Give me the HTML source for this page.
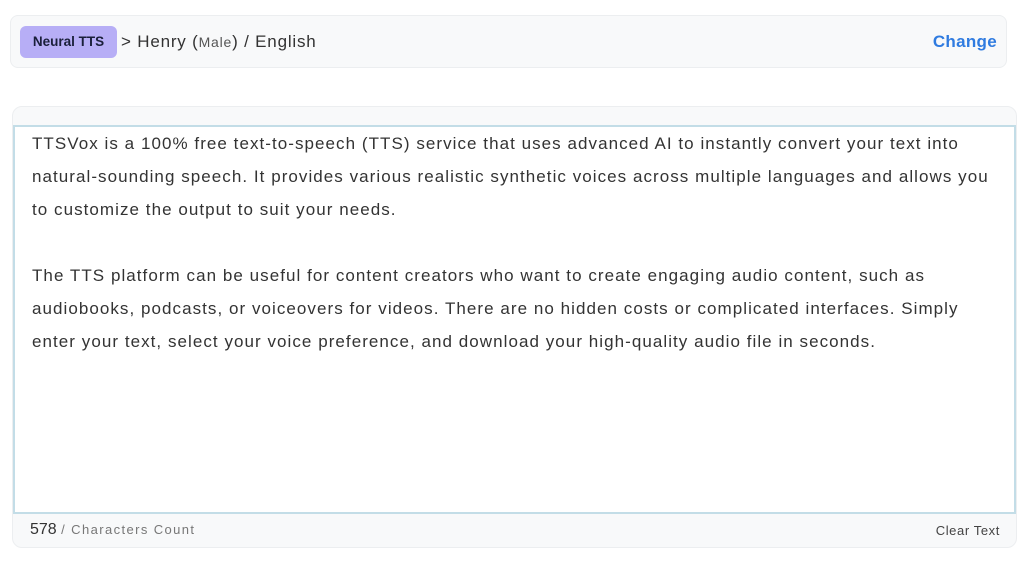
<!DOCTYPE html>
<html><head><meta charset="utf-8"><style>
*{box-sizing:border-box;margin:0;padding:0}
body{width:1024px;height:565px;background:#fff;font-family:"Liberation Sans",sans-serif;color:#333;position:relative;overflow:hidden}
.top{position:absolute;left:10px;top:15px;width:997px;height:53px;background:#f8f9fa;border:1px solid #eceef0;border-radius:8px}
.badge{position:absolute;left:9px;top:10px;width:97px;height:32px;background:#b7aef6;border-radius:6px;font-weight:bold;font-size:13.5px;color:#1a1f3a;text-align:center;line-height:32px}
.voice{position:absolute;left:110px;top:15px;font-size:17px;color:#333;line-height:22px;letter-spacing:0.8px}
.voice small{font-size:14px;color:#555}
.change{position:absolute;right:9px;top:15px;font-size:17px;font-weight:bold;color:#2f7be0;line-height:22px;letter-spacing:0.3px}
.card{position:absolute;left:12px;top:106px;width:1005px;height:442px;background:#f8f9fa;border:1px solid #eceef0;border-radius:10px}
.ta{position:absolute;left:0;top:18px;width:1003px;height:389px;background:#fff;border:2px solid #c3dde7}
.txt{position:absolute;left:17px;top:0px;font-size:17px;line-height:33px;color:#333;letter-spacing:1.05px;white-space:nowrap}
.foot{position:absolute;left:17px;top:414px;font-size:16px;color:#333}
.foot span{font-size:13px;color:#777;letter-spacing:1.4px}
.clear{position:absolute;right:16px;top:416px;font-size:13px;color:#444;letter-spacing:0.6px}
</style></head><body>
<div class="top">
<div class="badge">Neural TTS</div>
<div class="voice">&gt; Henry (<small>Male</small>) / English</div>
<div class="change">Change</div>
</div>
<div class="card">
<div class="ta"><div class="txt">TTSVox is a 100% free text-to-speech (TTS) service that uses advanced AI to instantly convert your text into<br>natural-sounding speech. It provides various realistic synthetic voices across multiple languages and allows you<br>to customize the output to suit your needs.<br><br>The TTS platform can be useful for content creators who want to create engaging audio content, such as<br>audiobooks, podcasts, or voiceovers for videos. There are no hidden costs or complicated interfaces. Simply<br>enter your text, select your voice preference, and download your high-quality audio file in seconds.</div></div>
<div class="foot">578 <span>/ Characters Count</span></div>
<div class="clear">Clear Text</div>
</div>
</body></html>
